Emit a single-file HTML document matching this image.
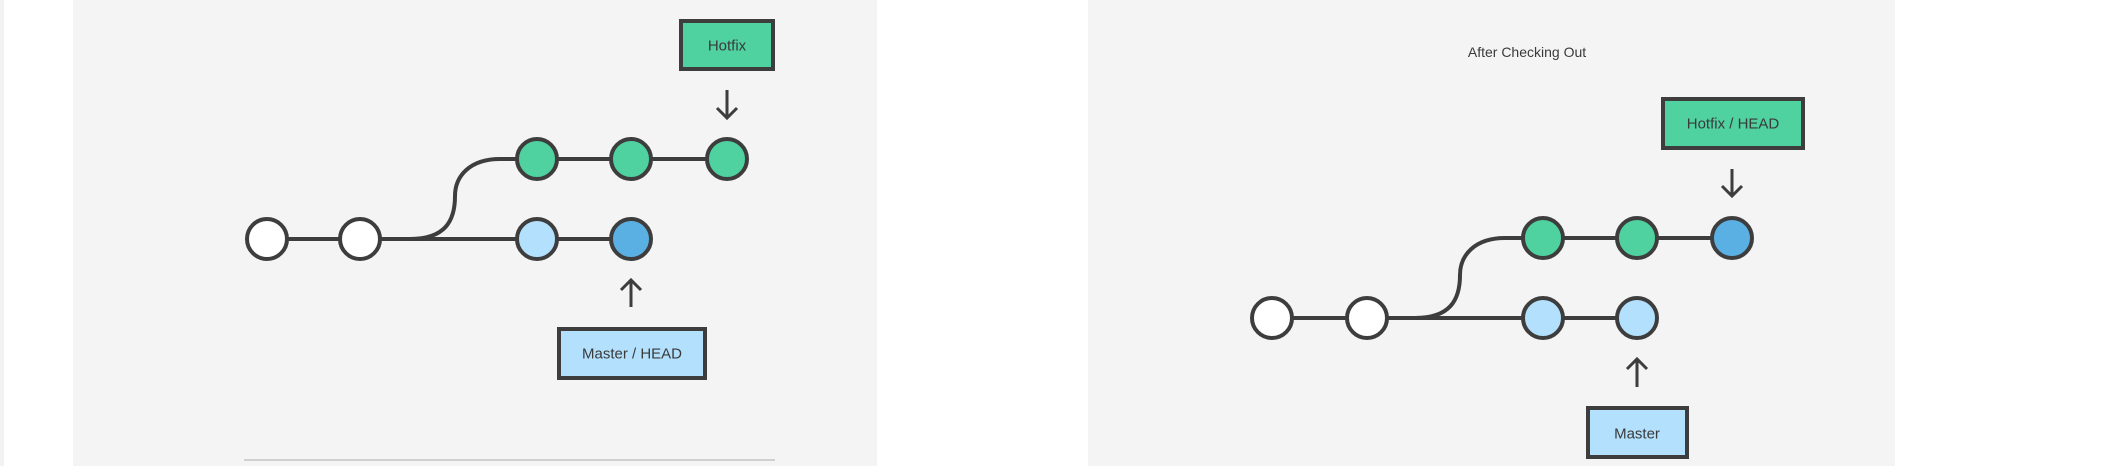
<!DOCTYPE html>
<html><head><meta charset="utf-8"><style>
html,body{margin:0;padding:0;background:#fff;width:2122px;height:466px;overflow:hidden}
svg{display:block}
text{font-family:"Liberation Sans",sans-serif;font-size:15px;fill:#3a3a3a;text-anchor:middle;dominant-baseline:central}
</style></head><body>
<svg width="2122" height="466" viewBox="0 0 2122 466">
<rect x="0" y="0" width="4" height="466" fill="#f2f2f2"/>
<rect x="73" y="0" width="804" height="466" fill="#f4f4f4"/>
<rect x="1088" y="0" width="807" height="466" fill="#f4f4f4"/>
<line x1="244" y1="460" x2="775" y2="460" stroke="#d0d0d0" stroke-width="2"/>
<g transform="translate(0,1)">
<g fill="none" stroke="#3d3d3d" stroke-width="4">
 <line x1="267" y1="238" x2="631" y2="238"/>
 <path d="M410 238 C445 238 455 220 455 195 C455 175 470 158 500 158 L727 158"/>
 <line x1="1272" y1="317" x2="1637" y2="317"/>
 <path d="M1415 317 C1450 317 1460 299 1460 274 C1460 254 1475 237 1505 237 L1732 237"/>
</g>
<g fill="none" stroke="#3d3d3d" stroke-width="3">
 <path d="M727 89 V117 M717 107 L727 117 L737 107"/>
 <path d="M631 306 V279 M621 289 L631 279 L641 289"/>
 <path d="M1732 168 V195 M1722 185 L1732 195 L1742 185"/>
 <path d="M1637 386 V358 M1627 368 L1637 358 L1647 368"/>
</g>
<g stroke="#3d3d3d" stroke-width="4">
 <circle cx="267" cy="238" r="20" fill="#fff"/>
 <circle cx="360" cy="238" r="20" fill="#fff"/>
 <circle cx="537" cy="238" r="20" fill="#b3e1fd"/>
 <circle cx="631" cy="238" r="20" fill="#5aafe3"/>
 <circle cx="537" cy="158" r="20" fill="#4fd1a0"/>
 <circle cx="631" cy="158" r="20" fill="#4fd1a0"/>
 <circle cx="727" cy="158" r="20" fill="#4fd1a0"/>
 <circle cx="1272" cy="317" r="20" fill="#fff"/>
 <circle cx="1367" cy="317" r="20" fill="#fff"/>
 <circle cx="1543" cy="317" r="20" fill="#b3e1fd"/>
 <circle cx="1637" cy="317" r="20" fill="#b3e1fd"/>
 <circle cx="1543" cy="237" r="20" fill="#4fd1a0"/>
 <circle cx="1637" cy="237" r="20" fill="#4fd1a0"/>
 <circle cx="1732" cy="237" r="20" fill="#5aafe3"/>
 <rect x="681" y="20" width="92" height="48" fill="#4fd1a0"/>
 <rect x="559" y="328" width="146" height="49" fill="#b3e1fd"/>
 <rect x="1663" y="98" width="140" height="49" fill="#4fd1a0"/>
 <rect x="1588" y="407" width="99" height="49" fill="#b3e1fd"/>
</g>
<text x="727" y="45">Hotfix</text>
<text x="632" y="353">Master / HEAD</text>
<text x="1733" y="123">Hotfix / HEAD</text>
<text x="1637" y="433">Master</text>
<text x="1527" y="51" style="font-size:14px">After Checking Out</text>
</g>
</svg>
</body></html>
